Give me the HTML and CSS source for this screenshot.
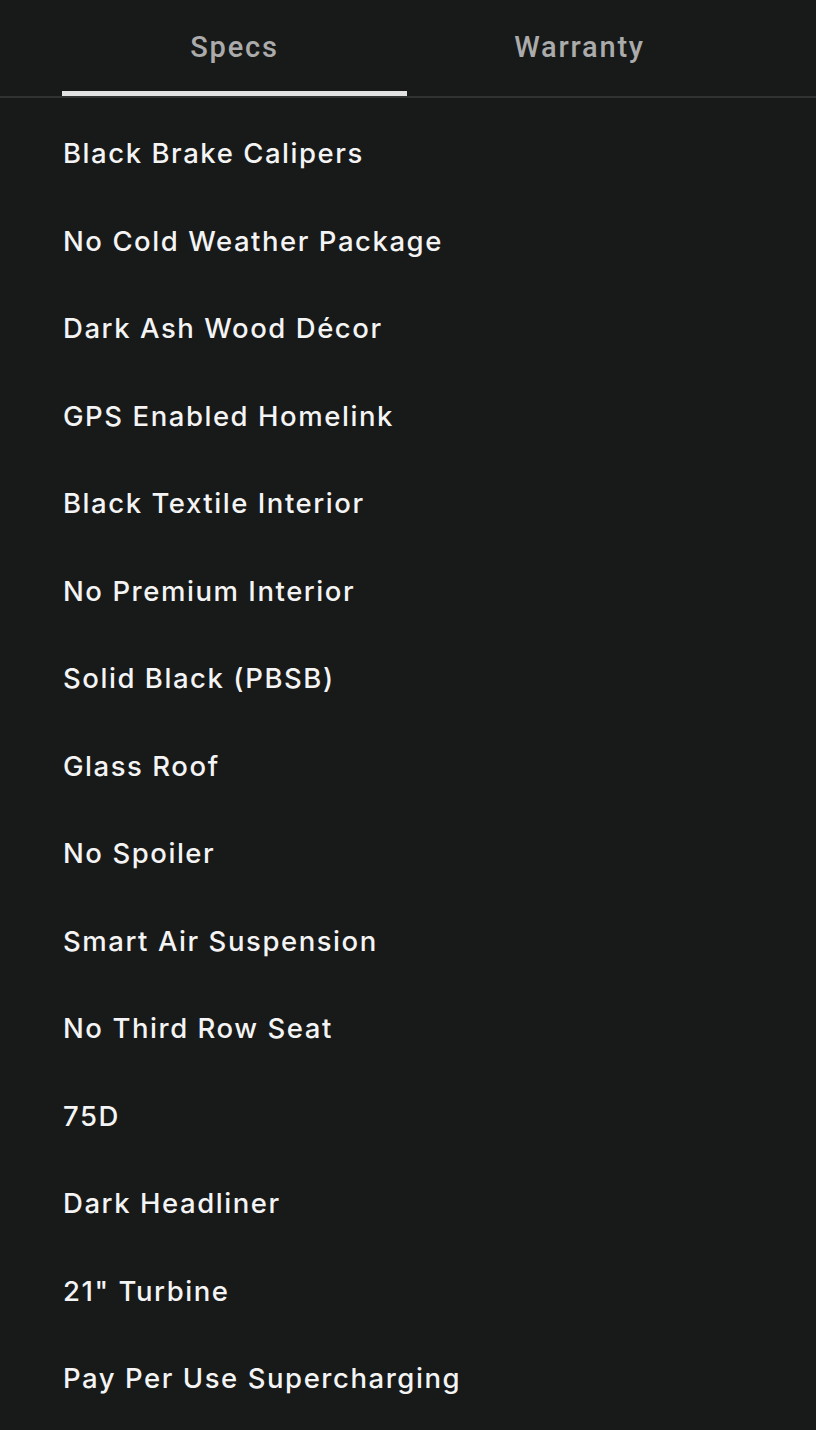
FILE: index.html
```html
<!DOCTYPE html>
<html lang="en">
<head>
<meta charset="utf-8">
<title>Specs</title>
<link rel="stylesheet" href="styles.css">
</head>
<body>
<div class="page">
  <nav class="tabs">
    <div class="tab tab-active">Specs</div>
    <div class="tab">Warranty</div>
  </nav>
  <ul class="specs">
    <li>Black Brake Calipers</li>
    <li>No Cold Weather Package</li>
    <li>Dark Ash Wood Décor</li>
    <li>GPS Enabled Homelink</li>
    <li>Black Textile Interior</li>
    <li>No Premium Interior</li>
    <li>Solid Black (PBSB)</li>
    <li>Glass Roof</li>
    <li>No Spoiler</li>
    <li>Smart Air Suspension</li>
    <li>No Third Row Seat</li>
    <li>75D</li>
    <li>Dark Headliner</li>
    <li>21" Turbine</li>
    <li>Pay Per Use Supercharging</li>
  </ul>
</div>
</body>
</html>
```
FILE: styles.css
```css
html, body {
  margin: 0;
  padding: 0;
  background: #181a1a;
}
.page {
  width: 816px;
  height: 1430px;
  overflow: hidden;
  background: #181a1a;
}
.tabs {
  display: flex;
  padding: 0 64px 0 62px;
  border-bottom: 2px solid #303232;
  height: 96px;
}
.tab {
  flex: 1;
  text-align: center;
  font-family: Roboto, "Liberation Sans", sans-serif;
  font-weight: 500;
  font-size: 29px;
  letter-spacing: 1.8px;
  line-height: 30px;
  padding-top: 32px;
  color: #ababab;
  box-sizing: border-box;
}
.tab-active {
  border-bottom: 5px solid #e2e2e2;
}
.specs {
  list-style: none;
  margin: 0;
  padding: 12px 0 0 63px;
}
.specs li {
  font-family: Inter, "Liberation Sans", sans-serif;
  font-weight: 500;
  font-size: 27.5px;
  letter-spacing: 1.55px;
  line-height: 87.5px;
  color: #f4f4f4;
}
```
